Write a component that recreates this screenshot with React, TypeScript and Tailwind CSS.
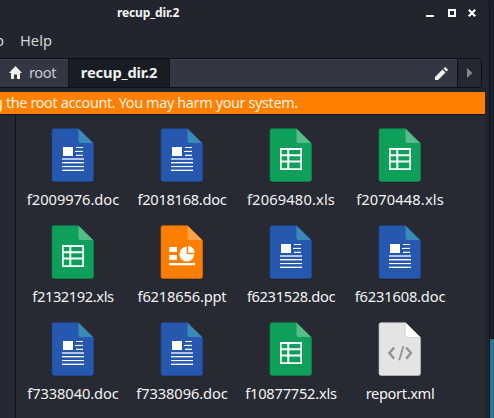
import React from "react";

type Kind = "doc" | "xls" | "ppt" | "xml";

const files: { name: string; kind: Kind; tracking: string }[] = [
  { name: "f2009976.doc", kind: "doc", tracking: "" },
  { name: "f2018168.doc", kind: "doc", tracking: "tracking-[-0.29px]" },
  { name: "f2069480.xls", kind: "xls", tracking: "tracking-[0.16px]" },
  { name: "f2070448.xls", kind: "xls", tracking: "tracking-[0.12px]" },
  { name: "f2132192.xls", kind: "xls", tracking: "tracking-[-0.4px]" },
  { name: "f6218656.ppt", kind: "ppt", tracking: "tracking-[-0.17px]" },
  { name: "f6231528.doc", kind: "doc", tracking: "tracking-[-0.37px]" },
  { name: "f6231608.doc", kind: "doc", tracking: "tracking-[-0.17px]" },
  { name: "f7338040.doc", kind: "doc", tracking: "tracking-[-0.08px]" },
  { name: "f7338096.doc", kind: "doc", tracking: "tracking-[-0.08px]" },
  { name: "f10877752.xls", kind: "xls", tracking: "tracking-[-0.24px]" },
  { name: "report.xml", kind: "xml", tracking: "tracking-[-0.38px]" },
];

const colors: Record<Kind, { page: string; fold: string; edge: string }> = {
  doc: { page: "#2558ae", fold: "#3a8ab8", edge: "#1f4c95" },
  xls: { page: "#0ea05a", fold: "#57bb8a", edge: "#0d894d" },
  ppt: { page: "#fe7e00", fold: "#fea24c", edge: "#dd6e02" },
  xml: { page: "#e4e4e4", fold: "#ffffff", edge: "#bdbdbd" },
};

function Glyph({ kind }: { kind: Kind }) {
  if (kind === "doc")
    return (
      <g fill="#fff" shapeRendering="crispEdges">
        <rect x="12" y="20" width="10" height="9" />
        <rect x="25" y="20" width="7" height="1" />
        <rect x="24" y="24" width="8" height="1" />
        <rect x="25" y="23" width="7" height="1" opacity=".15" />
        <rect x="25" y="28" width="7" height="1" />
        <rect x="25" y="27" width="7" height="1" opacity=".3" />
        <rect x="11" y="31" width="22" height="2" opacity=".65" />
        <rect x="11" y="35" width="22" height="1" />
        <rect x="11" y="36" width="22" height="1" opacity=".35" />
        <rect x="11" y="39" width="22" height="1" />
        <rect x="11" y="40" width="22" height="1" opacity=".1" />
        <rect x="11" y="43" width="22" height="1" />
        <rect x="11" y="42" width="22" height="1" opacity=".35" />
      </g>
    );
  if (kind === "xls")
    return (
      <path
        fill="#fff"
        fillRule="evenodd"
        d="M11 21h22v22H11z M12.7 23v4.2h5.6V23z M20.3 23v4.2h11V23z M12.7 29.2v4.2h5.6v-4.2z M20.3 29.2v4.2h11v-4.2z M12.7 35.4v5.8h5.6v-5.8z M20.3 35.4v5.8h11v-5.8z"
      />
    );
  if (kind === "ppt")
    return (
      <g fill="#fff">
        <path d="M9.3 23H17v5H9.3z M9.3 31H17v5H9.3z M9.3 39H35v2.3H9.3z" />
        <path d="M26.7 22.8v7.5h7.5a7.4 7.4 0 1 1-7.5-7.5z" />
        <path d="M28 22.1a6.8 6.8 0 0 1 6.8 6.7H28z" />
      </g>
    );
  return (
    <g fill="none" stroke="#929292">
      <path d="M16.1 26.5L11.4 32l4.7 5.7 M28.2 26.5l4.7 5.5-4.7 5.7" strokeWidth="2.4" />
      <path d="M25.4 25.2l-4.2 14" strokeWidth="1.8" />
    </g>
  );
}

function FileIcon({ kind }: { kind: Kind }) {
  const c = colors[kind];
  return (
    <svg width="44" height="56" viewBox="0 0 44 56" className="block">
      <path d="M2.5 2H28l14.5 14.5v37q0 2-2 2h-38q-2 0-2-2v-49q0-2 2-2z" fill="#000" opacity=".18" />
      <path d="M2.8 1.7H27.5L42.5 16.5v36q0 2-2 2H3q-2 0-2-2V3.7q0-2 1.8-2z" fill={c.page} stroke={c.edge} strokeOpacity=".7" />
      <path d="M27.5 1.7L42 16H29.5q-2 0-2-2z" fill={c.fold} />
      {kind === "xml" && <path d="M27 2v12.5q0 2 2 2h13" fill="none" stroke="#cfcfcf" strokeWidth=".8" />}
      <Glyph kind={kind} />
    </svg>
  );
}

function TitleBar() {
  return (
    <header className="flex h-[26px] shrink-0">
      <div className="w-[117px]" />
      <div className="w-[305px] text-[12px] leading-[26px] font-bold tracking-[-0.13px] text-[#f4f4f4]">recup_dir.2</div>
      <svg width="64" height="26" viewBox="0 0 64 26" fill="none" stroke="#fff">
        <path d="M4 16h8" strokeWidth="2" />
        <path d="M27 10h6v6h-6z" strokeWidth="2" />
        <path d="M46.8 9.8l6.4 6.4m0-6.4l-6.4 6.4" strokeWidth="2.2" />
      </svg>
    </header>
  );
}

function PathBar() {
  return (
    <nav className="flex h-[30px] w-[482px] shrink-0 rounded-r-[4px] border-y border-r border-[#0f1117] bg-[#333743] text-[14.67px] leading-[22px]">
      <div className="flex w-[68px] items-center border-t border-[#3d414d] pb-[3px] pl-[9px] text-[#c9ccd0]">
        <svg width="13" height="13" viewBox="0 0 13 13" className="mr-[7px] shrink-0" fill="#f0f0ee">
          <path d="M6.5 0L13 7h-2v6H8V8.5H5V13H2V7H0z" />
        </svg>
        <span className="tracking-[-0.4px]">root</span>
      </div>
      <div className="flex w-[102px] items-center justify-center border-x border-[#13151b] bg-[#1a1c23] pb-[2px] font-bold tracking-[-0.12px] text-[#f0f0ee]">
        recup_dir.2
      </div>
      <div className="flex flex-1 items-center justify-end border-t border-[#3d414d] pr-[9px] pb-px">
        <svg width="13" height="13" viewBox="0 0 13 13" fill="#f2f2ee">
          <path d="M0 10L7.5 2.5l3 3L3 13H0z M8.5 1.5L9.6.4q.6-.6 1.2 0l1.8 1.8q.6.6 0 1.2l-1.1 1.1z" />
        </svg>
      </div>
      <div className="flex w-[24px] items-center justify-center rounded-r-[3px] border-l border-[#0f1117] bg-[#252731]">
        <svg width="6" height="10" viewBox="0 0 6 10" fill="#84868a">
          <path d="M0 0l5.5 5L0 10z" />
        </svg>
      </div>
    </nav>
  );
}

export default function App() {
  return (
    <div className="flex h-[418px] w-[494px] overflow-hidden bg-[#1a202b] font-['Noto_Sans',sans-serif]">
      <div className="flex w-[490px] shrink-0 flex-col rounded-tr-[5px] border-r border-[#111319] bg-[#23252e]">
        <TitleBar />
        <div className="flex h-[28px] w-[485px] shrink-0 border-b border-[#20222a] text-[14.67px] leading-[28px] text-[#d3d5d8]">
          <div className="flex w-[4px] justify-end">p</div>
          <div className="ml-[16px]">Help</div>
        </div>
        <div className="h-[4px] shrink-0" />
        <PathBar />
        <div className="h-[4px] shrink-0" />
        <div className="flex h-[23px] w-[485px] shrink-0 border-b border-[#111319] bg-[#ff7f00] text-[14.4px] leading-[21px] tracking-[-0.35px] whitespace-nowrap text-[#fff4e6]">
          <span className="-ml-[6px]">g the root account. You may harm your system.</span>
        </div>
        <div className="flex min-h-0 w-[485px] flex-1 bg-[#272933]">
          <aside className="w-[16px] shrink-0 border-r border-[#0e1015] bg-[#262833]" />
          <main className="ml-[3px] grid h-[303px] grid-cols-[repeat(4,109px)] grid-rows-[repeat(3,97px)] pt-[12px]">
            {files.map((f) => (
              <div key={f.name} className="flex w-[108px] flex-col items-center">
                <FileIcon kind={f.kind} />
                <span className={`mt-[5px] text-[14.67px] leading-[22px] whitespace-nowrap text-[#f4f4f4] ${f.tracking}`}>{f.name}</span>
              </div>
            ))}
          </main>
        </div>
      </div>
      <div className="flex w-[4px] flex-col">
        <div className="h-[339px] border-b border-[#0d1118] bg-[#1a202b]" />
        <div className="flex-1 bg-[#22799a]" />
      </div>
    </div>
  );
}
